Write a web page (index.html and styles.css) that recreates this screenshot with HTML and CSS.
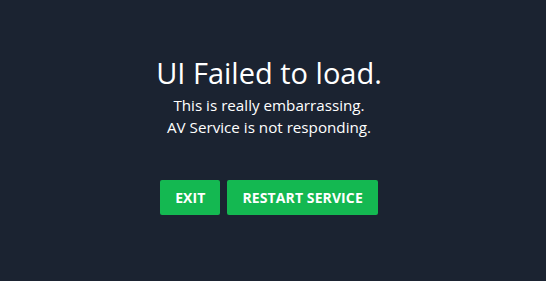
FILE: index.html
```html
<!DOCTYPE html>
<html lang="en">
<head>
    <meta charset="UTF-8">
    <link rel="stylesheet" href="styles.css">
</head>
<body>
<div class="error">
    <h1 class="title">UI Failed to load.</h1>
    <p class="line">This is really embarrassing.</p>
    <p class="line">AV Service is not responding.</p>
    <div class="actions">
        <button class="btn">EXIT</button>
        <button class="btn">RESTART SERVICE</button>
    </div>
</div>
</body>
</html>
```

FILE: styles.css
```css
body {
    margin: 0;
    height: 281px;
    background: #1b2331;
    font-family: "Open Sans", Lato, sans-serif;
    color: #fff;
}
.error {
    display: flex;
    flex-direction: column;
    align-items: center;
    padding-top: 53px;
    padding-right: 8px;
}
.title {
    margin: 0 0 1px;
    font-size: 29px;
    font-weight: 400;
    line-height: 40px;
}
.line {
    margin: 0;
    font-size: 15.2px;
    line-height: 22px;
}
.actions {
    display: flex;
    gap: 7px;
    margin-top: 42px;
}
.btn {
    height: 35px;
    border: none;
    border-radius: 2px;
    background: #14b851;
    color: #fff;
    font-family: inherit;
    font-size: 14px;
    font-weight: 700;
    letter-spacing: 0.1px;
    padding: 0 15px;
}
```
